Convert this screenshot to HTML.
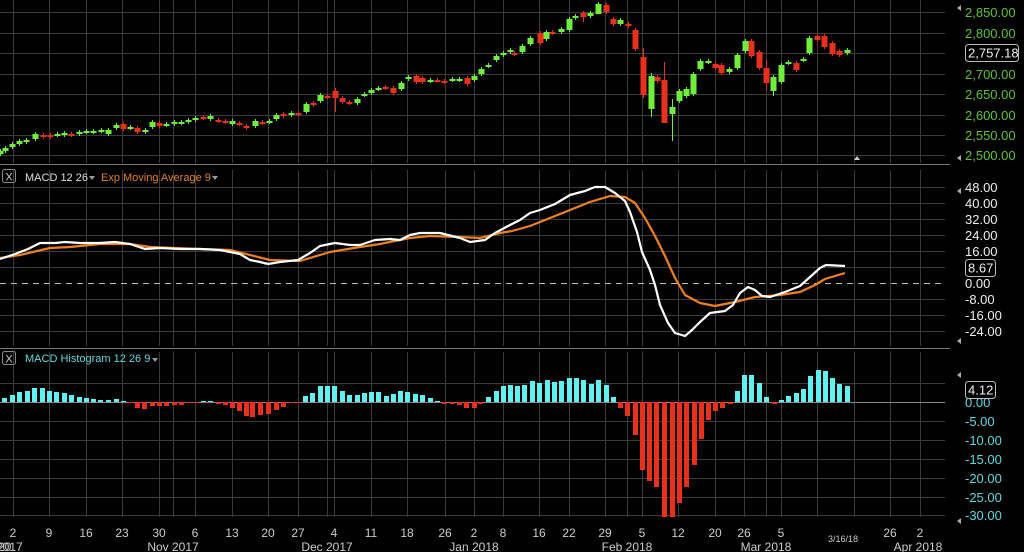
<!DOCTYPE html>
<html><head><meta charset="utf-8"><style>
html,body{margin:0;padding:0;background:#000;width:1024px;height:552px;overflow:hidden}
svg{display:block}
text{font-family:"Liberation Sans","DejaVu Sans",sans-serif}
</style></head><body>
<svg id="s" width="1024" height="552" viewBox="0 0 1024 552" xmlns="http://www.w3.org/2000/svg"></svg>
<script>
let out="";
function L(x1,y1,x2,y2,c,w,extra){out+=`<line x1="${x1}" y1="${y1}" x2="${x2}" y2="${y2}" stroke="${c}" stroke-width="${w||1}" ${extra||""}/>`;}
function R(x,y,w,h,c){out+=`<rect x="${x}" y="${y}" width="${w}" height="${h}" fill="${c}"/>`;}
function T(x,y,s,c,sz,anchor){out+=`<text x="${x}" y="${y}" fill="${c}" font-size="${sz||13}" text-anchor="${anchor||"start"}">${s}</text>`;}
const G="#3a3a3a";
const vx=[13,49,86,122,159,173,195,232,268,298,327,334,371,407,445,474,503,539,569,605,627,642,678,715,744,766,781,817,854,890,920];
vx.forEach(x=>{L(x+.5,0,x+.5,163,G);L(x+.5,170,x+.5,346,G);L(x+.5,352,x+.5,517,G);});
[12,33,53,74,94,115,135,155].forEach(y=>L(0,y+.5,945,y+.5,G));
[187,203,219,235,251,267,299,315,331].forEach(y=>L(0,y+.5,945,y+.5,G));
L(0,283.5,945,283.5,"#bbb",1,'stroke-dasharray="6,5"');
[383,421,440,459,478,497,515].forEach(y=>L(0,y+.5,945,y+.5,G));
L(0,402.5,945,402.5,"#888",1);
L(0,164.5,950,164.5,"#777");L(0,348.5,950,348.5,"#777");
const c=[[0,151,154,1],[5,148,151,1],[12,144,147,1],[19,141,144,1],[26,140,142,1],[35,134,139,1],[43,135,137,0],[50,135,137,0],[57,134,135,1],[64,133,135,1],[71,134,135,0],[79,132,134,1],[86,131,132,1],[93,131,132,1],[101,130,131,1],[108,130,134,1],[116,125,128,1],[123,124,129,0],[130,127,128,1],[137,128,132,0],[145,130,132,1],[152,122,127,1],[159,123,126,0],[166,124,125,1],[174,122,124,1],[181,122,123,1],[188,120,122,1],[195,118,120,1],[203,117,118,0],[210,116,119,1],[218,120,121,0],[225,121,122,0],[232,121,124,1],[239,123,124,0],[246,126,128,0],[255,121,126,1],[262,122,123,0],[269,121,122,1],[276,115,119,1],[283,114,116,0],[291,113,115,1],[298,113,114,0],[306,104,112,1],[313,103,105,0],[320,95,101,1],[327,96,97,0],[335,91,98,0],[342,98,102,0],[349,102,103,0],[357,99,103,1],[364,94,95,1],[371,90,93,1],[378,88,89,1],[385,87,88,0],[393,88,93,0],[401,83,89,1],[408,77,79,1],[416,76,82,0],[422,78,82,0],[430,80,81,1],[437,80,81,0],[444,81,82,0],[452,79,80,1],[459,79,80,1],[467,78,84,0],[474,76,80,1],[481,69,74,1],[488,65,66,1],[496,56,60,1],[503,53,55,1],[510,50,52,1],[514,53,54,0],[522,46,52,1],[530,38,44,1],[540,33,43,0],[546,32,39,1],[552,32,33,0],[561,29,32,1],[569,19,30,1],[575,16,18,1],[583,13,17,0],[590,13,16,1],[598,4,14,1],[606,5,12,0],[613,19,24,0],[620,20,24,1],[628,24,26,0],[635,30,49,0],[643,57,95,0],[651,76,109,1],[657,77,81,0],[664,80,123,0],[672,107,114,1],[679,91,101,1],[686,89,96,1],[693,74,94,1],[700,61,69,1],[708,61,62,1],[715,64,68,0],[721,65,73,0],[729,69,72,1],[737,55,68,1],[745,41,51,1],[751,41,56,0],[759,52,68,0],[766,68,83,0],[773,77,91,1],[781,65,82,1],[788,62,63,1],[796,63,70,0],[803,59,60,1],[809,38,53,1],[817,36,40,0],[824,36,47,0],[832,43,54,0],[839,51,55,0],[847,50,53,1]];
const wk={643:[48,98],651:[73,117],672:[99,141],664:[62,123],583:[11,22],598:[2,14],773:[75,96],766:[60,90],335:[88,112]};
c.forEach(([x,t,b,g])=>{const col=g?"#6fef3c":"#e8301c";const w=wk[x]||[t-2,b+2];L(x+.5,w[0],x+.5,w[1],col);R(x-2.5,t,6,Math.max(2,b-t),col);});
const wh=[[0,259],[15,254],[28,249],[40,243],[55,243],[65,242],[80,243],[100,243],[115,242],[130,244],[145,249],[160,248],[180,249],[200,249],[220,250],[240,254],[250,260],[260,262],[268,264],[280,262],[298,260],[310,253],[320,246],[335,243],[350,245],[360,245],[375,240],[390,239],[400,240],[410,235],[420,233],[440,233],[460,238],[470,242],[485,240],[495,233],[510,225],[520,220],[530,213],[540,210],[555,204],[570,195],[585,191],[595,187],[605,187],[615,193],[625,201],[630,212],[637,232],[642,252],[650,270],[655,285],[660,305],[668,323],[675,333],[685,336],[692,330],[700,322],[710,313],[725,311],[733,305],[740,293],[748,287],[755,290],[762,296],[770,297],[785,292],[800,286],[810,277],[820,268],[826,265],[845,266]];
const or=[[0,258],[20,255],[50,248],[70,247],[100,244],[130,244],[150,247],[200,249],[230,250],[270,260],[300,261],[330,252],[360,247],[380,244],[410,238],[430,236],[460,237],[480,238],[500,233],[512,231],[530,226],[560,214],[590,202],[610,196],[625,197],[635,203],[645,218],[655,236],[665,256],[675,278],[685,295],[700,303],[715,306],[735,302],[755,297],[780,295],[800,292],[815,285],[825,279],[845,273]];
out+=`<polyline points="${or.map(p=>p.join(",")).join(" ")}" fill="none" stroke="#f0801e" stroke-width="2.2" stroke-linejoin="round"/>`;
out+=`<polyline points="${wh.map(p=>p.join(",")).join(" ")}" fill="none" stroke="#fff" stroke-width="2.2" stroke-linejoin="round"/>`;
const h=[[4,398],[12,395],[19,392],[27,391],[34,388],[42,388],[49,391],[56,392],[64,393],[71,395],[79,397],[86,398],[93,399],[100,400],[108,400],[116,399],[123,401],[130,403],[137,408],[144,409],[152,406],[159,406],[166,406],[174,405],[181,405],[188,403],[195,403],[203,401],[210,401],[218,404],[225,405],[232,408],[239,411],[246,416],[252,417],[260,415],[268,414],[276,410],[283,407],[291,403],[298,403],[305,396],[312,393],[320,386],[327,386],[334,386],[342,391],[349,395],[357,395],[364,393],[371,392],[378,392],[386,396],[393,394],[400,391],[407,392],[415,394],[422,395],[430,398],[437,401],[444,404],[452,404],[459,405],[466,408],[474,408],[480,404],[488,397],[496,391],[503,386],[510,385],[517,386],[524,385],[532,381],[539,383],[547,380],[554,382],[561,381],[569,378],[576,378],[583,380],[591,384],[598,380],[606,385],[613,397],[620,408],[627,416],[635,435],[642,470],[649,481],[656,487],[664,517],[672,517],[679,503],[686,487],[694,465],[701,439],[708,420],[715,411],[722,408],[730,404],[737,391],[744,375],[751,375],[759,383],[766,397],[774,404],[781,400],[788,396],[796,393],[803,389],[810,376],[818,370],[825,371],[832,378],[839,384],[847,386]];
h.forEach(([x,y])=>{if(y<402)R(x-2,y,5,402-y,"#5ff2f2");else R(x-2,402,5,Math.max(1,y-402),"#e8301c");});
out+=`<rect x="2.5" y="169.5" width="13" height="13" rx="2" fill="none" stroke="#888"/>`;T(9,180.5,"X","#ccc",11,"middle");
T(25,181,"MACD 12 26","#ddd",11);out+=`<path d="M89 176h6l-3 4z" fill="#999"/>`;
T(101,181,"Exp Moving Average 9","#e0802a",11);out+=`<path d="M212 176h6l-3 4z" fill="#999"/>`;
out+=`<rect x="2.5" y="351.5" width="13" height="13" rx="2" fill="none" stroke="#888"/>`;T(9,362.5,"X","#ccc",11,"middle");
T(25,362,"MACD Histogram 12 26 9","#5fd8e0",11);out+=`<path d="M152 358h6l-3 4z" fill="#999"/>`;
[["2,850.00",12],["2,800.00",33],["2,700.00",74],["2,650.00",94],["2,600.00",115],["2,550.00",135],["2,500.00",155]].forEach(([s,y])=>T(965,y+5,s,"#5cc22e",13));
out+=`<rect x="965.5" y="44.5" width="53" height="17" rx="3" fill="#000" stroke="#bbb"/>`;T(968,57.5,"2,757.18","#eee",13);
[["48.00",187],["40.00",203],["32.00",219],["24.00",235],["16.00",251],["0.00",283],["-8.00",299],["-16.00",315],["-24.00",331]].forEach(([s,y])=>T(965,y+5,s,"#eee",13));
out+=`<rect x="965.5" y="259.5" width="30" height="17" rx="3" fill="#000" stroke="#bbb"/>`;T(968,272.5,"8.67","#eee",13);
[["0.00",402],["-5.00",421],["-10.00",440],["-15.00",459],["-20.00",478],["-25.00",497],["-30.00",515]].forEach(([s,y])=>T(965,y+5,s,"#5fd8e0",13));
out+=`<rect x="965.5" y="381.5" width="30" height="17" rx="3" fill="#000" stroke="#bbb"/>`;T(968,394.5,"4.12","#eee",13);
[[960,8],[960,158],[960,191],[960,341],[960,375],[960,521]].forEach(([x,y])=>out+=`<path d="M${x-3} ${y}l4 -3v6z" fill="#aaa"/>`);
out+=`<path d="M854 160l3-4 3 4z" fill="#ccc"/>`;
[["2",13],["9",49],["16",86],["23",122],["30",159],["6",195],["13",232],["20",268],["27",298],["4",334],["11",371],["18",407],["26",445],["2",474],["8",503],["16",539],["22",569],["29",605],["5",642],["12",678],["20",715],["26",744],["5",781],["26",890],["2",920]].forEach(([s,x])=>T(x,537,s,"#ccc",12,"middle"));
T(843,542,"3/16/18","#ccc",9,"middle");
[["Nov 2017",173],["Dec 2017",327],["Jan 2018",474],["Feb 2018",627],["Mar 2018",766],["Apr 2018",918]].forEach(([s,x])=>T(x,551,s,"#ccc",12,"middle"));
T(-4,551,"2017","#ccc",12);T(-2,551,"20","#ccc",12);
document.getElementById("s").innerHTML=out;
</script>
</body></html>
